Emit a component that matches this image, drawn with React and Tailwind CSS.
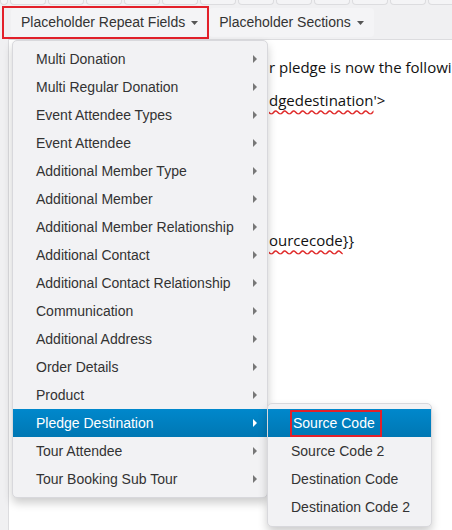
import { useState } from 'react'

const repeatFields = [
  'Multi Donation',
  'Multi Regular Donation',
  'Event Attendee Types',
  'Event Attendee',
  'Additional Member Type',
  'Additional Member',
  'Additional Member Relationship',
  'Additional Contact',
  'Additional Contact Relationship',
  'Communication',
  'Additional Address',
  'Order Details',
  'Product',
  'Pledge Destination',
  'Tour Attendee',
  'Tour Booking Sub Tour',
]

const destinationFields = ['Source Code', 'Source Code 2', 'Destination Code', 'Destination Code 2']

function Caret({ className }) {
  return (
    <svg width="7" height="4" viewBox="0 0 7 4" className={className}>
      <path d="M0 0h7L3.5 4z" fill="currentColor" />
    </svg>
  )
}

function CaretRight({ active }) {
  return (
    <svg width="4" height="8" viewBox="0 0 4 8" className={active ? 'text-white' : 'text-[#777]'}>
      <path d="M0 0l4 4-4 4z" fill="currentColor" />
    </svg>
  )
}

function MenuItem({ label, active, hasSub, outlined }) {
  return (
    <div
      className={
        'flex h-[28px] items-center justify-between pl-[23px] pr-[10px] ' +
        (active ? 'bg-gradient-to-b from-[#0088cc] to-[#0077b3] text-white' : 'text-[#333]')
      }
    >
      {outlined ? (
        <span className="-ml-[1px] flex h-[27px] items-center border-2 border-[#e3202a] pl-[1px] pr-[5px]">{label}</span>
      ) : (
        <span>{label}</span>
      )}
      {hasSub && <CaretRight active={active} />}
    </div>
  )
}

export default function App() {
  const [openItem] = useState('Pledge Destination')

  return (
    <div className="relative h-[530px] w-[452px] overflow-hidden bg-[#f0f0f2] font-['Liberation_Sans',Arial,sans-serif] text-[14px]">
      {/* strip of toolbar buttons above */}
      <div className="flex h-[5px] gap-[2px]">
        <div className="w-[8px] shrink-0 rounded-b border-x border-b border-[#dcdcdf] bg-[#f4f4f6]" />
        {Array.from({ length: 12 }).map((_, i) => (
          <div key={i} className="w-[36px] shrink-0 rounded-b border-x border-b border-[#dcdcdf] bg-[#f4f4f6]" />
        ))}
      </div>

      {/* placeholder toolbar */}
      <div className="flex h-[34px] items-center pl-[2px]">
        <div className="flex h-[33px] items-center border-2 border-[#e3202a] pl-[7px] pr-[1px]">
          <button className="flex h-[29px] items-center gap-[6px] rounded bg-[#f4f4f6] pl-[10px] pr-[8px] text-[#333]">
            Placeholder Repeat Fields
            <Caret className="mt-[2px] text-[#555]" />
          </button>
        </div>
        <button className="flex h-[29px] items-center gap-[6px] rounded bg-[#f4f4f6] pl-[10px] pr-[10px] text-[#333]">
          Placeholder Sections
          <Caret className="mt-[2px] text-[#555]" />
        </button>
      </div>

      {/* editor body */}
      <div className="ml-[8px] h-full border-l border-t border-[#dcdcdf] bg-white font-['Open_Sans',sans-serif] text-[15px] text-[#111]">
        <p className="pl-[260px] pt-[16px] leading-[22px] whitespace-nowrap">r pledge is now the followi</p>
        <p className="mt-[11px] pl-[260px] leading-[22px] whitespace-nowrap">
          <span className="underline decoration-wavy decoration-[#e02a2a] underline-offset-[3px]">dgedestination</span>'&gt;
        </p>
        <p className="mt-[118px] pl-[260px] leading-[22px] whitespace-nowrap">
          <span className="underline decoration-wavy decoration-[#e02a2a] underline-offset-[3px]">ourcecode</span>{'}}'}
        </p>
      </div>

      {/* repeat fields dropdown */}
      <div className="absolute left-[12px] top-[40px] w-[256px] rounded-[5px] border border-[#d8d8dc] bg-[#f2f2f4] py-[4px] shadow-[0_5px_10px_rgba(0,0,0,0.2)]">
        {repeatFields.map((f) => (
          <MenuItem key={f} label={f} hasSub active={f === openItem} />
        ))}
      </div>

      {/* pledge destination submenu */}
      <div className="absolute left-[267px] top-[403px] w-[165px] rounded-[5px] border border-[#d8d8dc] bg-[#f2f2f4] py-[5px] shadow-[0_5px_10px_rgba(0,0,0,0.2)]">
        {destinationFields.map((f, i) => (
          <MenuItem key={f} label={f} active={i === 0} outlined={i === 0} />
        ))}
      </div>
    </div>
  )
}
